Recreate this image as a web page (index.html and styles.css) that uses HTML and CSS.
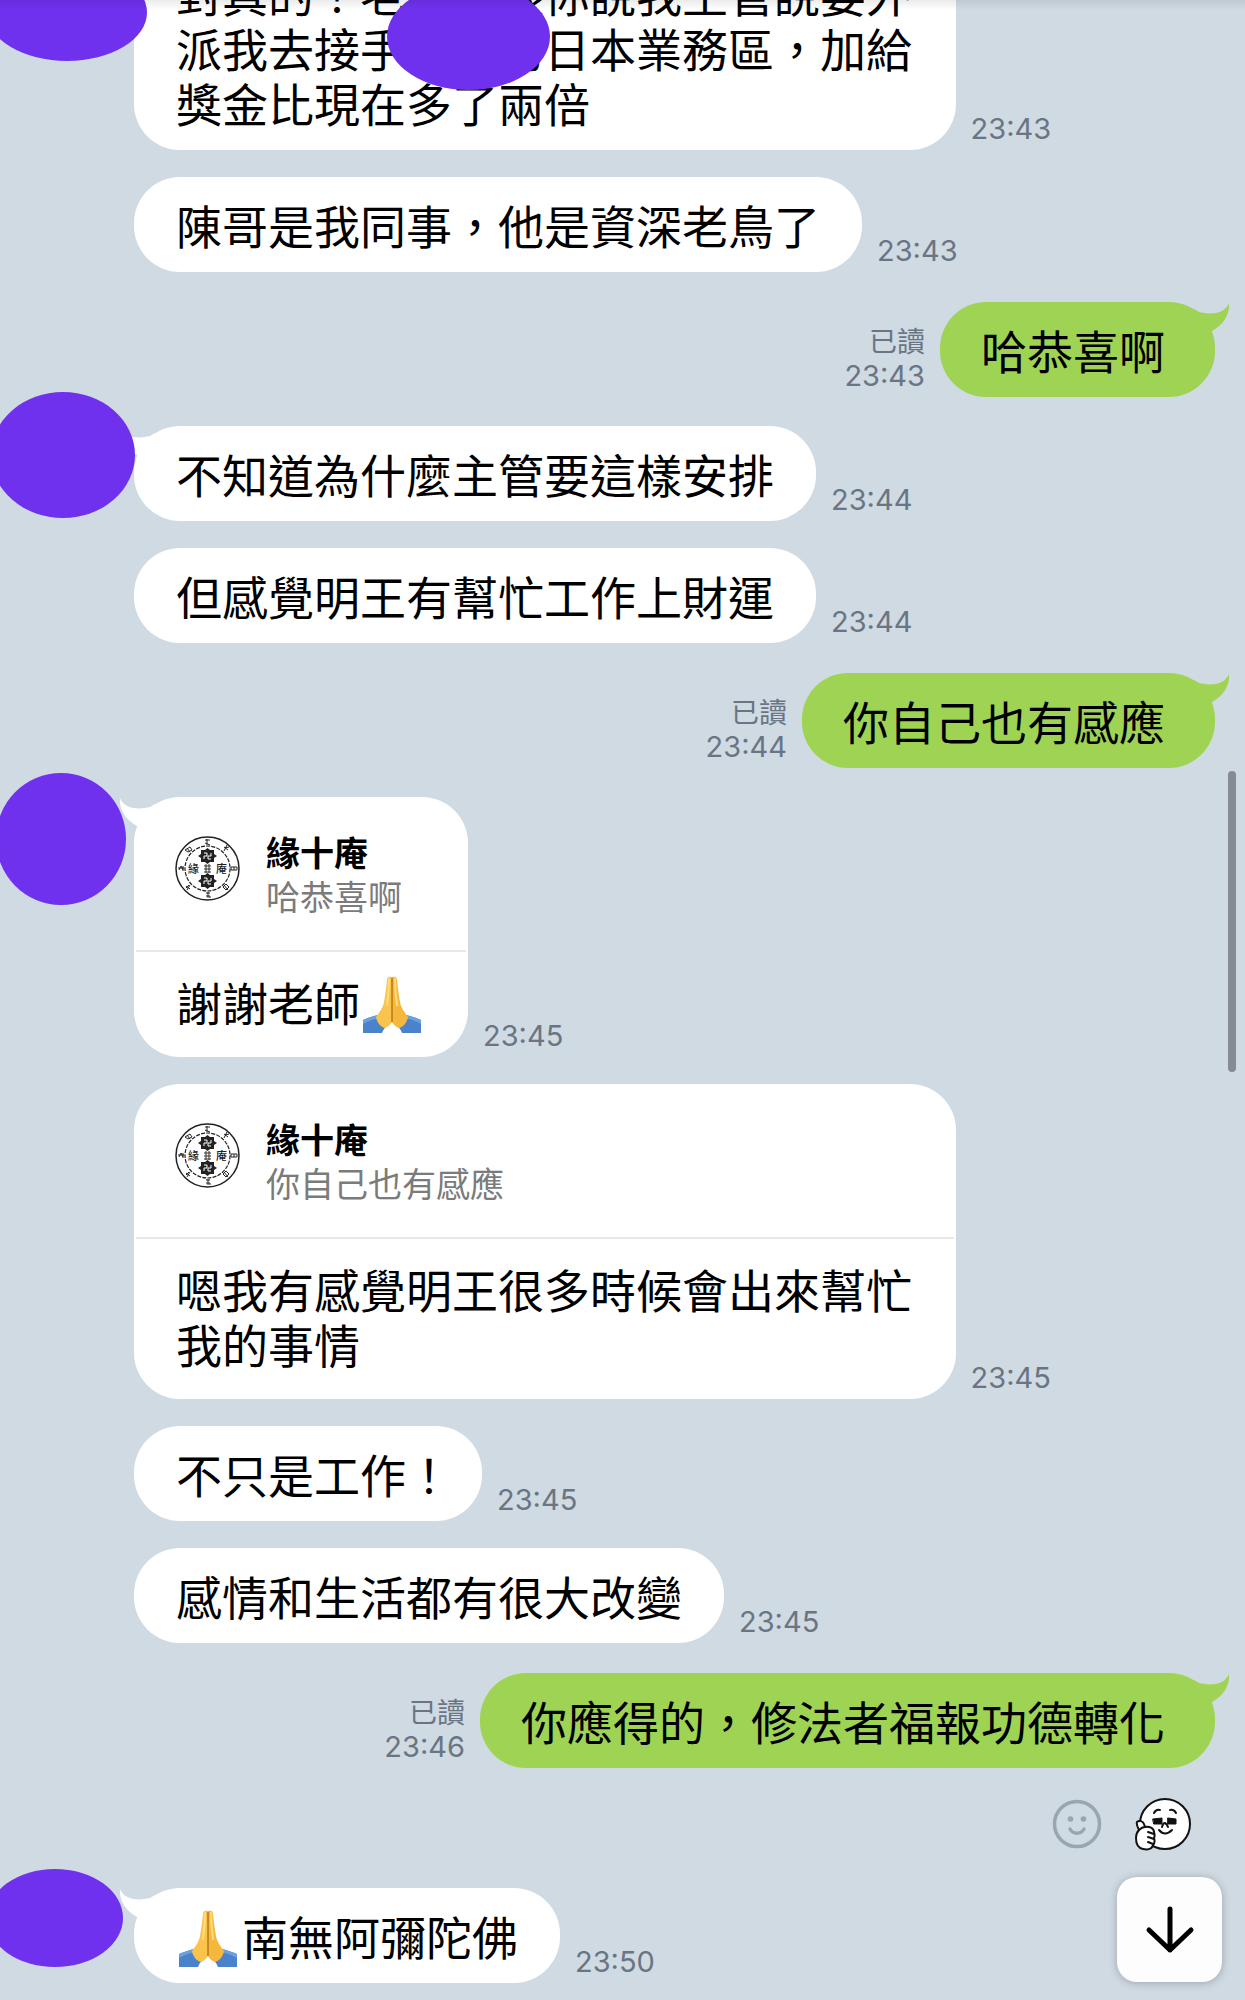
FILE: index.html
```
<!DOCTYPE html>
<html lang="zh-Hant">
<head>
  <meta charset="UTF-8">
  <meta name="viewport" content="width=device-width, initial-scale=1.0">
  <title>聊天</title>
  <link rel="stylesheet" href="styles.css">
</head>
<body>
  <!-- Shared shapes -->
  <svg class="defs" width="0" height="0" aria-hidden="true">
    <symbol id="tail" viewBox="0 0 36 32">
      <path d="M0 7 L5 10 C16 13 31 12 35 1 C36 13 29 23 18 29 L12 32 L0 32 Z"/>
    </symbol>

    <symbol id="pray" viewBox="0 0 58 57">
      <path d="M0 44 C5 42 10 40 15 39 L25 49 C22 51 20 54 19 57 H0 Z" fill="#4a82cb"/>
      <path d="M58 44 C53 42 48 40 43 39 L33 49 C36 51 38 54 39 57 H58 Z" fill="#4a82cb"/>
      <path d="M0 44 C5 42 10 40 15 39 L17 42 C11 43 5 45 0 48 Z" fill="#6b9fdd"/>
      <path d="M58 44 C53 42 48 40 43 39 L41 42 C47 43 53 45 58 48 Z" fill="#6b9fdd"/>
      <path d="M29 1 C26 0 24 1 24 4 C23 14 22 20 21 26 C20 32 16 37 13 41 C14 47 18 51 22 52 C25 51 28 48 29 46 Z" fill="#fac44c"/>
      <path d="M29 1 C32 0 34 1 34 4 C35 14 36 20 37 26 C38 32 42 37 45 41 C44 47 40 51 36 52 C33 51 30 48 29 46 Z" fill="#f5b83c"/>
      <path d="M26 3 C26 14 25 22 24 29 M32 3 C32 14 33 22 34 29" stroke="#ffdc7c" stroke-width="2" fill="none" stroke-linecap="round"/>
      <path d="M29 2 V46" stroke="#b87818" stroke-width="1.5"/>
    </symbol>

    <symbol id="seal" viewBox="0 0 65 65">
      <circle cx="32.5" cy="32.5" r="31.5" fill="#fff" stroke="#222" stroke-width="1.5"/>
      <circle cx="32.5" cy="32.5" r="22.5" fill="none" stroke="#222" stroke-width="1.2" stroke-dasharray="4 1.2"/>
      <g fill="none" stroke="#222" stroke-width="1">
        <path d="M30 4 H35 M32 3 V9 M30 7 L35 9"/>
        <path d="M49 11 L53 14 M52 9 L49 15 M50 12 L54 11"/>
        <path d="M56 31 H62 V34 H56 Z M59 31 V34"/>
        <path d="M48 51 L51 48 L54 51 L51 54 Z M49 49 L53 54"/>
        <path d="M31 57 H35 M33 56 V62 M31 60 H35 V62"/>
        <path d="M11 50 L15 53 M15 49 L12 54 M11 52 L14 49"/>
        <path d="M4 34 L6 30 L8 34 M3 32 H9 M8 30 V35"/>
        <path d="M10 14 L15 11 L17 14 L13 16 Z M12 12 L15 16"/>
      </g>
      <g id="cross">
        <path d="M32.5 12 L35 14 H39 V18 L42 20 L39 22 V26 H35 L32.5 28 L30 26 H26 V22 L23 20 L26 18 V14 H30 Z" fill="#222"/>
        <path d="M29 17 H32 V20 H29 V23 M36 23 H33 V20 H36 V17" fill="none" stroke="#fff" stroke-width="1"/>
      </g>
      <use href="#cross" y="25"/>
      <path d="M29 30 H36 M29 33 H36 M29 36 H36 M31 28 V37 M34 28 V37" stroke="#333" stroke-width="1" fill="none"/>
      <text x="13" y="37" class="seal-text">緣</text>
      <text x="41" y="37" class="seal-text">庵</text>
    </symbol>
  </svg>

  <main class="chat">
    <div class="message received">
      <div class="avatar avatar-wide"></div>
      <div class="bubble">對真的！老師，跟你說我主管說要外派我去接手陳哥的日本業務區，加給獎金比現在多了兩倍<span class="censor"></span></div>
      <div class="meta"><time>23:43</time></div>
    </div>

    <div class="message received">
      <div class="bubble">陳哥是我同事，他是資深老鳥了</div>
      <div class="meta"><time>23:43</time></div>
    </div>

    <div class="message sent turn">
      <div class="meta"><span class="read">已讀</span><time>23:43</time></div>
      <div class="bubble">哈恭喜啊<svg class="tail" aria-hidden="true"><use href="#tail"/></svg></div>
    </div>

    <div class="message received turn">
      <div class="bubble">不知道為什麼主管要這樣安排<svg class="tail" aria-hidden="true"><use href="#tail"/></svg></div>
      <div class="avatar avatar-large"></div>
      <div class="meta"><time>23:44</time></div>
    </div>

    <div class="message received">
      <div class="bubble">但感覺明王有幫忙工作上財運</div>
      <div class="meta"><time>23:44</time></div>
    </div>

    <div class="message sent turn">
      <div class="meta"><span class="read">已讀</span><time>23:44</time></div>
      <div class="bubble">你自己也有感應<svg class="tail" aria-hidden="true"><use href="#tail"/></svg></div>
    </div>

    <div class="message received turn">
      <div class="avatar avatar-round"></div>
      <div class="bubble card">
        <svg class="tail" aria-hidden="true"><use href="#tail"/></svg>
        <div class="quote">
          <svg class="seal" aria-hidden="true"><use href="#seal"/></svg>
          <div class="quote-body">
            <div class="quote-name">緣十庵</div>
            <div class="quote-text">哈恭喜啊</div>
          </div>
        </div>
        <div class="reply">謝謝老師<svg class="emoji" role="img" aria-label="🙏"><use href="#pray"/></svg></div>
      </div>
      <div class="meta"><time>23:45</time></div>
    </div>

    <div class="message received">
      <div class="bubble card">
        <div class="quote">
          <svg class="seal" aria-hidden="true"><use href="#seal"/></svg>
          <div class="quote-body">
            <div class="quote-name">緣十庵</div>
            <div class="quote-text">你自己也有感應</div>
          </div>
        </div>
        <div class="reply">嗯我有感覺明王很多時候會出來幫忙我的事情</div>
      </div>
      <div class="meta"><time>23:45</time></div>
    </div>

    <div class="message received">
      <div class="bubble end-mark">不只是工作！</div>
      <div class="meta"><time>23:45</time></div>
    </div>

    <div class="message received">
      <div class="bubble">感情和生活都有很大改變</div>
      <div class="meta"><time>23:45</time></div>
    </div>

    <div class="message sent turn">
      <div class="meta"><span class="read">已讀</span><time>23:46</time></div>
      <div class="bubble">你應得的，修法者福報功德轉化<svg class="tail" aria-hidden="true"><use href="#tail"/></svg></div>
    </div>

    <div class="reactions">
      <button class="icon-btn" type="button" aria-label="表情">
        <svg width="50" height="50" viewBox="0 0 50 50" fill="none" stroke="#98a5b3" stroke-linecap="round">
          <circle cx="25" cy="25" r="22.5" stroke-width="3.5"/>
          <path d="M18 30 C21 35.5 29 35.5 32 30" stroke-width="3.5"/>
          <circle cx="18.5" cy="20" r="2.8" fill="#98a5b3" stroke="none"/>
          <circle cx="31.5" cy="20" r="2.8" fill="#98a5b3" stroke="none"/>
        </svg>
      </button>
      <button class="icon-btn" type="button" aria-label="讚">
        <svg width="58" height="54" viewBox="0 0 58 54" fill="none" stroke="#111" stroke-width="2" stroke-linecap="round" stroke-linejoin="round">
          <circle cx="31" cy="27" r="25" fill="#fff"/>
          <path d="M20 16 Q22 12 26 13 M36 13 Q40 12 42 16"/>
          <path d="M19 22 L28 21 V27 H20 Z M34 21 L42 22 L42 27 H34 Z" fill="#111" stroke-width="1"/>
          <path d="M28 30 Q29 26 31 26 Q33 27 34 30"/>
          <path d="M25 33 Q31 40 38 33"/>
          <path d="M5 33 C4 31 2 27 3 25 C5 23 9 24 10 27 L11 30 C15 29 20 31 20 35 C21 38 21 39 20 41 C21 44 21 46 19 48 C18 52 14 53 9 52 C4 51 2 46 2 41 C2 37 3 35 5 33 Z" fill="#fff"/>
          <path d="M5 33 Q8 30 11 30 M14 35 L20 37 M14 40 L20 42 M14 45 L19 47"/>
        </svg>
      </button>
    </div>

    <div class="message received">
      <div class="avatar avatar-flat"></div>
      <div class="bubble"><svg class="tail" aria-hidden="true"><use href="#tail"/></svg><svg class="emoji" role="img" aria-label="🙏"><use href="#pray"/></svg>南無阿彌陀佛</div>
      <div class="meta"><time>23:50</time></div>
    </div>

    <div class="scroll-thumb"></div>
    <button class="scroll-down" type="button" aria-label="捲到最新訊息">
      <svg width="50" height="50" viewBox="0 0 50 50" fill="none" stroke="#000" stroke-width="5" stroke-linecap="round" stroke-linejoin="round">
        <path d="M25 4 V45 M4 25 L25 45 L46 25"/>
      </svg>
    </button>
  </main>
</body>
</html>
```
FILE: styles.css
```
* {
  box-sizing: border-box;
}

body {
  margin: 0;
  background: #d0dae3;
  color: #000;
  font-family: "Noto Sans CJK TC", "Noto Sans", sans-serif;
}

.defs {
  position: absolute;
}

/* Scrolled to the newest message, older ones run off the top */
.chat {
  position: relative;
  display: flex;
  flex-direction: column;
  justify-content: flex-end;
  gap: 27px;
  height: 100vh;
  padding: 0 30px 17px 134px;
  overflow: hidden;
}

.chat::before {
  content: "";
  position: absolute;
  top: 0;
  left: 0;
  right: 0;
  height: 10px;
  background: linear-gradient(rgba(0, 0, 0, 0.08), rgba(0, 0, 0, 0));
  z-index: 2;
}

.message {
  position: relative;
  display: flex;
  flex-shrink: 0;
  align-items: flex-end;
  gap: 15px;
}

.message.turn {
  margin-top: 2px;
}

.message.sent {
  justify-content: flex-end;
}

.message.sent.turn {
  margin-top: 3px;
}

.bubble {
  position: relative;
  max-width: 76%;
  padding: 20px 42px;
  border-radius: 46px;
  background: #fff;
  font-size: 46px;
  line-height: 55px;
}

.sent .bubble {
  padding: 20px 50px 20px 41px;
  background: #9ed354;
}

/* Full-width closing mark already leaves space on its right */
.bubble.end-mark {
  padding-right: 30px;
}

.tail {
  position: absolute;
  top: 0;
  right: -15px;
  width: 36px;
  height: 32px;
  fill: #9ed354;
}

.received .tail {
  right: auto;
  left: -15px;
  fill: #fff;
  transform: scaleX(-1);
}

.meta {
  display: flex;
  flex-direction: column;
  align-items: flex-end;
  padding-bottom: 4px;
  color: #6a7584;
  font-family: Inter, "Noto Sans CJK TC", sans-serif;
  font-size: 29px;
  line-height: 34px;
}

.read {
  font-size: 28px;
}

/* Quoted reply */
.bubble.card {
  padding: 0;
}

.quote {
  display: flex;
  gap: 26px;
  margin: 0 2px;
  padding: 33px 39px 32px;
  border-bottom: 2px solid #e6e8ea;
  font-size: 34px;
  line-height: 44px;
}

.seal {
  width: 65px;
  height: 65px;
  margin-top: 6px;
}

.seal-text {
  font-size: 11px;
  font-weight: 500;
  fill: #222;
}

.quote-name {
  font-weight: 700;
}

.quote-text {
  color: #7b7b7b;
}

.reply {
  padding: 22px 42px 28px;
}

.emoji {
  width: 58px;
  height: 57px;
  margin: 2px 5px -4px 3px;
  vertical-align: top;
}

/* Purple covers over the profile pictures and a name */
.avatar,
.censor {
  position: absolute;
  border-radius: 50%;
  background: #7031ee;
}

.avatar-wide {
  top: 19px;
  left: -147px;
  width: 160px;
  height: 97px;
  z-index: 1;
}

.avatar-large {
  top: -34px;
  left: -143px;
  width: 144px;
  height: 126px;
}

.avatar-round {
  top: -24px;
  left: -138px;
  width: 130px;
  height: 132px;
}

.avatar-flat {
  top: -19px;
  left: -147px;
  width: 136px;
  height: 98px;
}

.censor {
  top: 38px;
  left: 253px;
  width: 163px;
  height: 107px;
}

.reactions {
  display: flex;
  flex-shrink: 0;
  align-items: center;
  justify-content: flex-end;
  gap: 32px;
  padding: 2px 23px 10px 0;
}

.icon-btn {
  display: flex;
  padding: 0;
  border: none;
  background: none;
  cursor: pointer;
}

.scroll-thumb {
  position: absolute;
  top: 771px;
  right: 9px;
  width: 8px;
  height: 301px;
  border-radius: 4px;
  background: #868b93;
}

.scroll-down {
  position: absolute;
  right: 23px;
  bottom: 18px;
  display: flex;
  align-items: center;
  justify-content: center;
  width: 105px;
  height: 105px;
  padding: 0;
  border: none;
  border-radius: 20px;
  background: #fdfdfd;
  box-shadow: 0 1px 8px rgba(0, 0, 0, 0.25);
  cursor: pointer;
}
```
